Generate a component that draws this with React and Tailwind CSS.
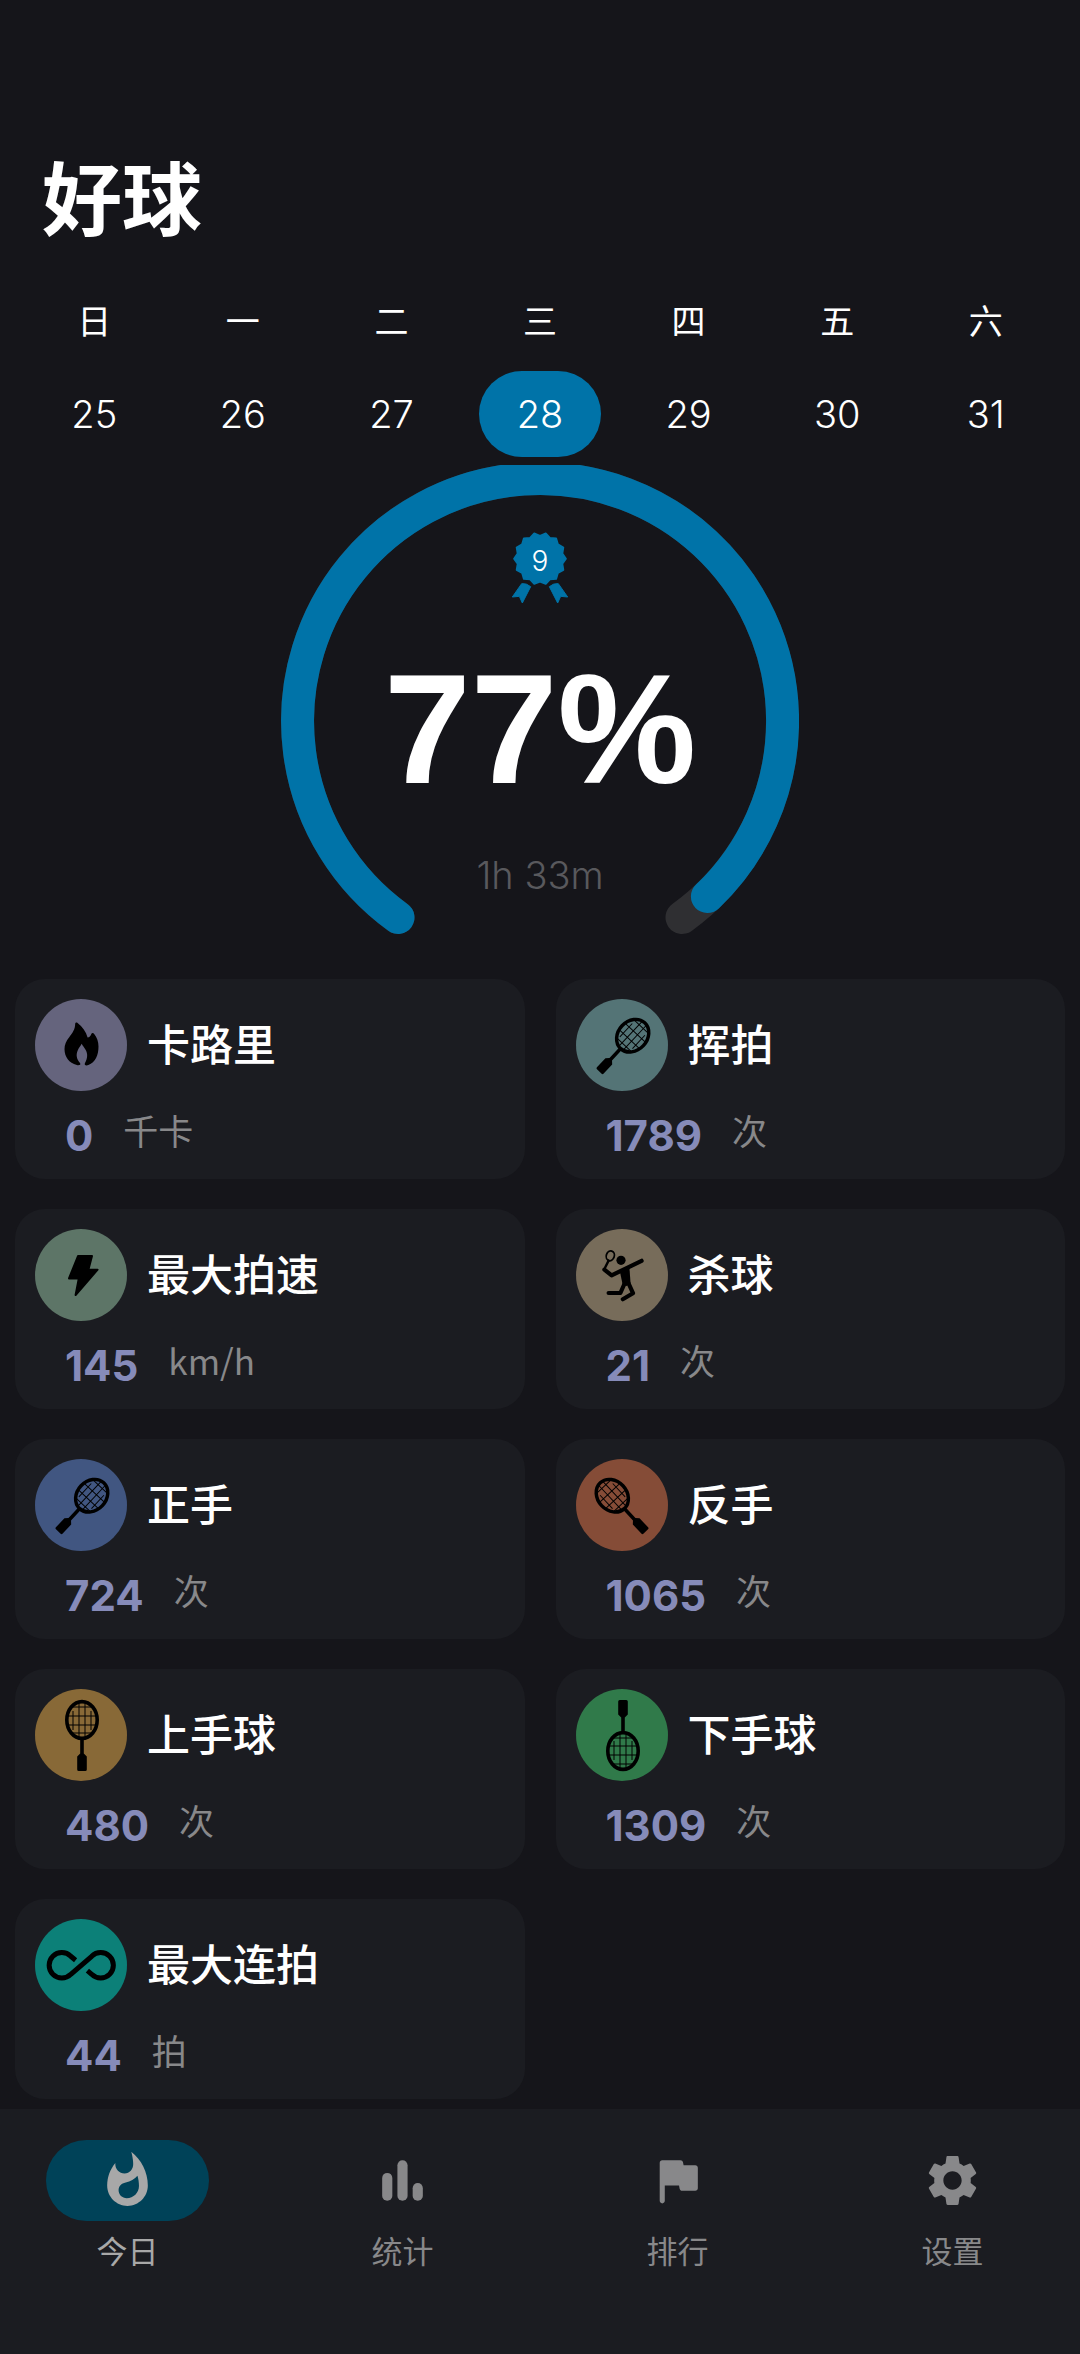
import { clsx } from 'clsx'
import { MdSettings, MdWhatshot } from 'react-icons/md'

const WEEK = [
  { label: '日', day: 25 },
  { label: '一', day: 26 },
  { label: '二', day: 27 },
  { label: '三', day: 28 },
  { label: '四', day: 29 },
  { label: '五', day: 30 },
  { label: '六', day: 31 },
]

const STATS = [
  { label: '卡路里', value: 0, unit: '千卡', color: 'bg-[#65647d]', Icon: FlameIcon },
  { label: '挥拍', value: 1789, unit: '次', color: 'bg-[#547476]', Icon: ForehandIcon },
  { label: '最大拍速', value: 145, unit: 'km/h', color: 'bg-[#5d7567]', Icon: BoltIcon },
  { label: '杀球', value: 21, unit: '次', color: 'bg-[#776c5a]', Icon: SmashIcon },
  { label: '正手', value: 724, unit: '次', color: 'bg-[#415681]', Icon: ForehandIcon },
  { label: '反手', value: 1065, unit: '次', color: 'bg-[#854c37]', Icon: BackhandIcon },
  { label: '上手球', value: 480, unit: '次', color: 'bg-[#886937]', Icon: OverhandIcon },
  { label: '下手球', value: 1309, unit: '次', color: 'bg-[#307a4a]', Icon: UnderhandIcon },
  { label: '最大连拍', value: 44, unit: '拍', color: 'bg-[#0c8078]', Icon: InfinityIcon },
]

const TABS = [
  { label: '今日', Icon: MdWhatshot, active: true },
  { label: '统计', Icon: BarsIcon },
  { label: '排行', Icon: FlagIcon },
  { label: '设置', Icon: MdSettings },
]

// 14 teeth around the rosette, starting on a notch at the top
const ROSETTE_POINTS = Array.from({ length: 28 }, (_, i) => {
  const angle = (i / 28) * Math.PI * 2 - Math.PI / 2
  const radius = i % 2 ? 78 : 69
  return `${(181 + Math.cos(angle) * radius).toFixed(1)},${(148 + Math.sin(angle) * radius).toFixed(1)}`
}).join(' ')

function StatSvg({ children }) {
  return (
    <svg viewBox="0 0 92 92" className="size-full" fill="currentColor" aria-hidden="true">
      {children}
    </svg>
  )
}

function FlameIcon() {
  return (
    <StatSvg>
      <path d="M40.2 24.6C40.4 23.4 41.6 23.1 42.6 23.9C47.4 27.6 51 32.5 52.6 38.6C54.4 38.2 55.6 36.8 56.2 35.2C56.8 33.7 58.3 33.8 59.2 35C62 38.6 63.5 42.6 63.5 47.6C63.5 56.5 60.4 63.5 53.4 66.1C50.8 67 48.9 66 50 64C52.6 59.4 53 54.8 50.4 50.6C49.2 48.6 47.6 46.6 46.7 44.8C45.4 47.2 43.8 49 42.8 51.2C40.7 55.8 41.6 60 45 64C46.2 65.6 44.3 66.8 41.8 66.1C34 64 29.6 58 29.5 50.3C29.4 45.6 31.2 41.8 34.2 38.2C37.6 34.1 40.2 30.2 40.2 24.6Z" />
    </StatSvg>
  )
}

function BoltIcon() {
  return (
    <StatSvg>
      <path
        d="M43 27H57L53.4 40.7H62.6L40.6 66L43.8 49.4H34Z"
        stroke="currentColor"
        strokeWidth="2"
        strokeLinejoin="round"
      />
    </StatSvg>
  )
}

function Racket() {
  return (
    <g>
      <path
        d="M38 22V41M44 14V48M50 14V48M56 22V41M36 18H58M33 27H62M32 36H62M36 44H58"
        stroke="currentColor"
        strokeWidth="1"
      />
      <ellipse cx="47" cy="31" rx="15.2" ry="18.4" fill="none" stroke="currentColor" strokeWidth="3.6" />
      <path d="M45.2 50H48.8V64.5L51.8 67.5V80.5Q51.8 82 50.3 82H43.7Q42.2 82 42.2 80.5V67.5L45.2 64.5Z" />
    </g>
  )
}

function OverhandIcon() {
  return (
    <StatSvg>
      <Racket />
    </StatSvg>
  )
}

function UnderhandIcon() {
  return (
    <StatSvg>
      <g transform="translate(0 93) scale(1 -1)">
        <Racket />
      </g>
    </StatSvg>
  )
}

function ForehandIcon() {
  return (
    <StatSvg>
      <g transform="translate(56.7 36.7) rotate(43) scale(0.96) translate(-47 -31)">
        <Racket />
      </g>
    </StatSvg>
  )
}

function BackhandIcon() {
  return (
    <StatSvg>
      <g transform="translate(36.3 36.7) rotate(-43) scale(0.96) translate(-47 -31)">
        <Racket />
      </g>
    </StatSvg>
  )
}

function SmashIcon() {
  return (
    <StatSvg>
      <ellipse
        cx="34.3"
        cy="26.8"
        rx="4"
        ry="5"
        fill="none"
        stroke="currentColor"
        strokeWidth="1.8"
        transform="rotate(18 34.3 26.8)"
      />
      <circle cx="45" cy="31.3" r="4.6" />
      <path d="M44 43L53.4 38.5L54.6 54.5L50.5 57L46.6 55.5Z" />
      <g fill="none" stroke="currentColor" strokeLinecap="round" strokeLinejoin="round">
        <path d="M32.6 31.6L28.4 40" strokeWidth="2.4" />
        <path d="M28.4 40.6L35.6 46.4L65.6 31.8M48.6 54.5L44.4 64H32.6M52.4 54L57 64.2L46.8 70.2" strokeWidth="4.2" />
      </g>
    </StatSvg>
  )
}

function InfinityIcon() {
  return (
    <StatSvg>
      <path
        d="M40.6 41.2L35.8 37.3A12.7 12.7 0 1 0 35.8 55.3L56.7 37.3A12.7 12.7 0 1 1 56.7 55.3L52.4 51.6"
        fill="none"
        stroke="currentColor"
        strokeWidth="5"
      />
    </StatSvg>
  )
}

function BarsIcon({ className }) {
  return (
    <svg viewBox="0 0 24 24" className={className} fill="currentColor" aria-hidden="true">
      <rect x="4" y="9" width="4" height="11" rx="2" />
      <rect x="10" y="4" width="4" height="16" rx="2" />
      <rect x="16" y="13" width="4" height="7" rx="2" />
    </svg>
  )
}

function FlagIcon({ className }) {
  return (
    <svg viewBox="0 0 24 24" className={className} fill="currentColor" aria-hidden="true">
      <path d="M14.4 6l-.24-1.2c-.09-.46-.5-.8-.98-.8H6c-.55 0-1 .45-1 1v15c0 .55.45 1 1 1s1-.45 1-1v-6h5.6l.24 1.2c.09.47.5.8.98.8H19c.55 0 1-.45 1-1V7c0-.55-.45-1-1-1h-4.6z" />
    </svg>
  )
}

function Badge({ count }) {
  return (
    <div className="grid w-[60px] justify-items-center text-[#0073a8]">
      <svg viewBox="91 68 180 219" className="col-start-1 row-start-1 h-[73px] w-[60px]" fill="currentColor" aria-hidden="true">
        <g stroke="currentColor" strokeLinejoin="round">
          <polygon points={ROSETTE_POINTS} strokeWidth="5" />
          <path
            d="M126 223Q140 221 153 232L128 281L119 261L98 263ZM236 223Q222 221 209 232L234 281L243 261L264 263Z"
            strokeWidth="3"
          />
        </g>
      </svg>
      <span className="col-start-1 row-start-1 pt-[11px] text-[28px] leading-9 font-light text-white">{count}</span>
    </div>
  )
}

function ProgressRing() {
  return (
    <section className="mt-2 grid justify-items-center">
      <svg viewBox="0 3 518 470" className="col-start-1 row-start-1 h-[470px] w-[518px]" fill="none" aria-hidden="true">
        <g strokeWidth="33" strokeLinecap="round">
          <path d="M117 455.5A242.5 242.5 0 1 1 401 455.5" stroke="#2f2f32" />
          <path d="M117 455.5A242.5 242.5 0 1 1 426.4 434.5" stroke="#0073a8" />
        </g>
      </svg>
      <div className="col-start-1 row-start-1 flex flex-col items-center pt-[67px]">
        <Badge count={9} />
        <p className="mt-[46px] font-['Liberation_Sans',sans-serif] text-[156px] leading-none font-bold text-white">77%</p>
        <p className="mt-12 text-[38px] leading-10 font-light text-[#59595d]">1h 33m</p>
      </div>
    </section>
  )
}

function StatCard({ label, value, unit, color, Icon }) {
  return (
    <article className="h-[200px] rounded-[30px] bg-[#1b1c21] p-5">
      <div className="flex items-center gap-5">
        <div className={clsx('size-[92px] shrink-0 rounded-full text-black', color)}>
          <Icon />
        </div>
        <h2 className="text-[43px] leading-[58px] font-medium text-white">{label}</h2>
      </div>
      <div className="mt-[25px] flex items-start gap-[30px] pl-[30px]">
        <span className="text-[42px] leading-10 font-bold text-[#868bb9]">{value}</span>
        <span className="font-['Noto_Sans_CJK_SC',sans-serif] text-[35px] leading-7 text-[#88888a]">{unit}</span>
      </div>
    </article>
  )
}

export default function App() {
  return (
    <div className="flex min-h-screen flex-col bg-[#15151a] font-['Inter','Noto_Sans_CJK_SC',sans-serif]">
      <main className="pt-[156px]">
        <h1 className="px-[42px] text-[80px] leading-[88px] font-bold text-white">好球</h1>

        <div className="mt-[58px] grid grid-cols-7 px-5">
          {WEEK.map(({ label, day }) => (
            <div key={day} className="flex flex-col items-center gap-[29px] text-white">
              <span className="text-[34px] leading-10 font-normal">{label}</span>
              <button
                type="button"
                className={clsx(
                  'h-[86px] w-[122px] rounded-full text-[38px] font-light',
                  day === 28 && 'bg-[#0073a8]',
                )}
              >
                {day}
              </button>
            </div>
          ))}
        </div>

        <ProgressRing />

        <section className="mt-11 grid grid-cols-2 gap-x-[31px] gap-y-[30px] px-[15px]">
          {STATS.map((stat) => (
            <StatCard key={stat.label} {...stat} />
          ))}
        </section>
      </main>

      <nav className="mt-[10px] grid grow grid-cols-4 items-start gap-5 bg-[#1b1c21] pt-[31px] pb-[84px]">
        {TABS.map(({ label, Icon, active }) => (
          <button
            key={label}
            type="button"
            className={clsx('flex flex-col items-center', active ? 'text-[#a8a8a8]' : 'text-[#88888a]')}
          >
            <span
              className={clsx(
                'flex h-[81px] w-[163px] items-center justify-center rounded-full',
                active && 'bg-[#004258]',
              )}
            >
              <Icon className="size-[61px]" />
            </span>
            <span className="mt-[13px] text-[31px] leading-9">{label}</span>
          </button>
        ))}
      </nav>
    </div>
  )
}
